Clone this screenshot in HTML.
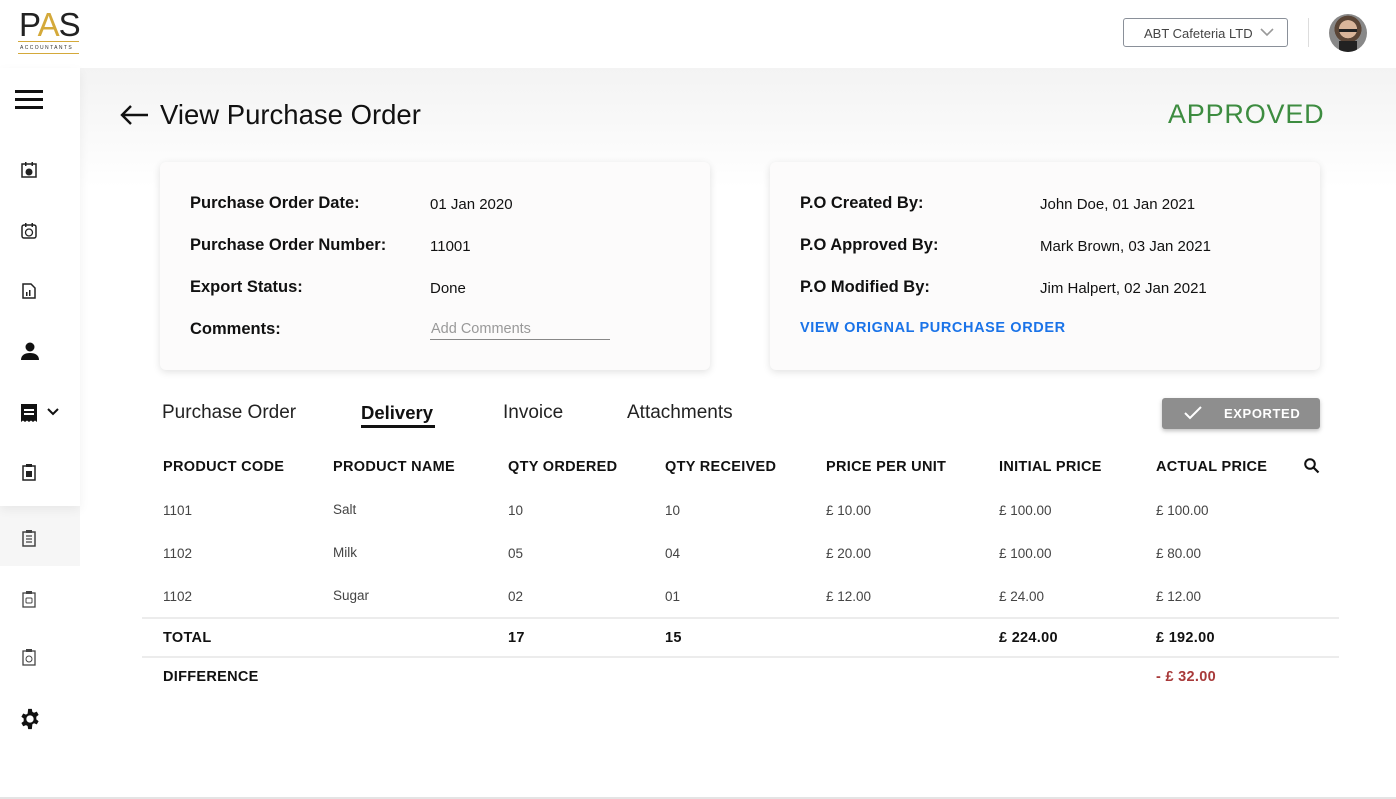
<!DOCTYPE html>
<html><head><meta charset="utf-8"><style>
*{margin:0;padding:0;box-sizing:border-box}
body{width:1396px;height:799px;overflow:hidden;background:#fff;font-family:"Liberation Sans",sans-serif;color:#111;position:relative}
.abs{position:absolute}
.main{left:80px;top:68px;width:1316px;height:730px;background:linear-gradient(#f3f3f3 0,#fff 120px)}
.side{left:0;top:68px;width:80px;height:438px;background:#fff;box-shadow:0 4px 10px rgba(0,0,0,.06)}
.side2{left:0;top:566px;width:80px;height:232px;background:#fff}
.notch{left:0;top:506px;width:80px;height:60px;background:#f6f6f6}
.card{background:#fcfbfb;border-radius:6px;box-shadow:0 2px 8px rgba(0,0,0,.12)}
.lbl{font-size:16.5px;color:#111;font-weight:bold}
.val{font-size:15px;color:#111}
.th{font-size:14.5px;letter-spacing:.3px;color:#111;font-weight:bold}
.td{font-size:13.5px;color:#444}
.tab{font-size:19px;color:#222}
.ic{position:absolute;left:20px}
</style></head><body>
<div class="abs main"></div>
<div class="abs notch"></div>
<div class="abs side"></div>
<div class="abs side2"></div>
<div class="abs" style="left:0;top:797px;width:1396px;height:2px;background:#e4e4e4"></div>

<div class="abs" style="left:19px;top:8px;font-size:33px;letter-spacing:-1px;color:#222;font-weight:300;line-height:1">P<span style="color:#d4a93a">A</span>S</div>
<div class="abs" style="left:18px;top:41px;width:61px;height:1px;background:#d4a93a"></div>
<div class="abs" style="left:20px;top:45px;font-size:5px;letter-spacing:1.4px;color:#333">ACCOUNTANTS</div>
<div class="abs" style="left:18px;top:53px;width:61px;height:1px;background:#d4a93a"></div>

<div class="abs" style="left:15px;top:90px;width:28px;height:3px;background:#111;box-shadow:0 8px 0 #111,0 16px 0 #111"></div>

<svg class="ic" style="top:161px" width="18" height="18" viewBox="0 0 18 18"><rect x="2" y="3" width="14" height="13" fill="none" stroke="#222" stroke-width="1.5"/><rect x="5" y="1" width="1.5" height="4" fill="#222"/><rect x="11.5" y="1" width="1.5" height="4" fill="#222"/><circle cx="9" cy="11" r="3.5" fill="#222"/></svg>
<svg class="ic" style="top:222px" width="18" height="18" viewBox="0 0 18 18"><rect x="2" y="3" width="14" height="13" rx="2" fill="none" stroke="#222" stroke-width="1.5"/><circle cx="9" cy="10.5" r="3.5" fill="none" stroke="#222" stroke-width="1.3"/><rect x="5" y="1" width="1.5" height="4" fill="#222"/><rect x="11.5" y="1" width="1.5" height="4" fill="#222"/></svg>
<svg class="ic" style="top:282px" width="18" height="18" viewBox="0 0 18 18"><path d="M3 2h8l4 4v10H3z" fill="none" stroke="#222" stroke-width="1.5"/><rect x="6" y="10" width="1.5" height="4" fill="#222"/><rect x="9" y="8" width="1.5" height="6" fill="#222"/></svg>
<svg class="ic" style="top:342px" width="20" height="18" viewBox="0 0 20 18"><circle cx="10" cy="5" r="4.5" fill="#111"/><path d="M1 18c0-5 4-7 9-7s9 2 9 7z" fill="#111"/></svg>
<svg class="ic" style="top:403px" width="18" height="20" viewBox="0 0 18 20"><path d="M1 1h16v18l-2-1.5-2 1.5-2-1.5-2 1.5-2-1.5-2 1.5-2-1.5-2 1.5z" fill="#111"/><rect x="4" y="6" width="10" height="2" fill="#fff"/><rect x="4" y="10" width="10" height="2" fill="#fff"/></svg>
<svg class="abs" style="left:46px;top:407px" width="14" height="10" viewBox="0 0 14 10"><path d="M2 2l5 5 5-5" fill="none" stroke="#111" stroke-width="2"/></svg>
<svg class="ic" style="top:463px" width="18" height="18" viewBox="0 0 18 18"><rect x="3" y="3" width="12" height="14" fill="none" stroke="#222" stroke-width="1.5"/><rect x="6" y="1" width="6" height="3" fill="#222"/><rect x="6" y="8" width="6" height="6" fill="#222"/></svg>
<svg class="ic" style="top:529px" width="18" height="18" viewBox="0 0 18 18"><rect x="3" y="3" width="12" height="14" fill="none" stroke="#444" stroke-width="1.5"/><rect x="6" y="1" width="6" height="3" fill="#444"/><path d="M6 7h6M6 10h6M6 13h6" stroke="#444" stroke-width="1.2"/></svg>
<svg class="ic" style="top:590px" width="18" height="18" viewBox="0 0 18 18"><rect x="3" y="3" width="12" height="14" fill="none" stroke="#444" stroke-width="1.3"/><rect x="6" y="1" width="6" height="3" fill="#444"/><rect x="6" y="8" width="6" height="5" rx="1" fill="none" stroke="#444"/></svg>
<svg class="ic" style="top:648px" width="18" height="18" viewBox="0 0 18 18"><rect x="3" y="3" width="12" height="14" fill="none" stroke="#444" stroke-width="1.3"/><rect x="6" y="1" width="6" height="3" fill="#444"/><circle cx="9" cy="11" r="3" fill="none" stroke="#444"/></svg>
<svg class="abs" style="left:19px;top:708px" width="22" height="22" viewBox="0 0 24 24"><path fill="#111" fill-rule="evenodd" d="M10 1h4l.6 3.2 1.8 1 3-1.2 2 3.5-2.5 2v2.9l2.5 2-2 3.5-3-1.2-1.8 1L14 23h-4l-.6-3.3-1.8-1-3 1.2-2-3.5 2.5-2v-2.9l-2.5-2 2-3.5 3 1.2 1.8-1zM12 8a4 4 0 100 8 4 4 0 000-8z"/></svg>

<div class="abs" style="left:1123px;top:18px;width:165px;height:29px;border:1px solid #8a9099;border-radius:3px;font-size:13px;color:#444;padding:7px 0 0 20px">ABT Cafeteria LTD</div>
<svg class="abs" style="left:1260px;top:28px" width="14" height="9" viewBox="0 0 14 9"><path d="M1 1l6 6 6-6" fill="none" stroke="#999" stroke-width="1.6"/></svg>
<div class="abs" style="left:1308px;top:18px;width:1px;height:29px;background:#ddd"></div>
<div class="abs" style="left:1329px;top:14px;width:38px;height:38px;border-radius:50%;background:radial-gradient(circle at 50% 40%,#d9b59a 0 30%,#5a4536 31% 45%,#888 46%);overflow:hidden"><div style="position:absolute;left:10px;top:27px;width:18px;height:12px;background:#222"></div><div style="position:absolute;left:10px;top:15px;width:18px;height:3px;background:#222"></div></div>

<svg class="abs" style="left:118px;top:103px" width="32" height="24" viewBox="0 0 32 24"><path d="M30 12H4M13 3l-9 9 9 9" fill="none" stroke="#111" stroke-width="2.4"/></svg>
<div class="abs" style="left:160px;top:99px;font-size:27.5px;color:#111">View Purchase Order</div>
<div class="abs" style="left:1168px;top:99px;font-size:27px;color:#3d8c40;letter-spacing:.8px">APPROVED</div>

<div class="abs card" style="left:160px;top:162px;width:550px;height:208px"></div>
<div class="abs card" style="left:770px;top:162px;width:550px;height:208px"></div>
<div class="abs lbl" style="left:190px;top:194px">Purchase Order Date:</div>
<div class="abs lbl" style="left:190px;top:236px">Purchase Order Number:</div>
<div class="abs lbl" style="left:190px;top:278px">Export Status:</div>
<div class="abs lbl" style="left:190px;top:320px">Comments:</div>
<div class="abs val" style="left:430px;top:196px">01 Jan 2020</div>
<div class="abs val" style="left:430px;top:238px">11001</div>
<div class="abs val" style="left:430px;top:280px">Done</div>
<div class="abs" style="left:431px;top:321px;font-size:14.5px;color:#999">Add Comments</div>
<div class="abs" style="left:430px;top:339px;width:180px;height:1px;background:#888"></div>

<div class="abs lbl" style="left:800px;top:194px">P.O Created By:</div>
<div class="abs lbl" style="left:800px;top:236px">P.O Approved By:</div>
<div class="abs lbl" style="left:800px;top:278px">P.O Modified By:</div>
<div class="abs val" style="left:1040px;top:196px">John Doe, 01 Jan 2021</div>
<div class="abs val" style="left:1040px;top:238px">Mark Brown, 03 Jan 2021</div>
<div class="abs val" style="left:1040px;top:280px">Jim Halpert, 02 Jan 2021</div>
<div class="abs" style="left:800px;top:320px;font-size:14.5px;color:#1a73e8;letter-spacing:.6px;font-weight:bold">VIEW ORIGNAL PURCHASE ORDER</div>

<div class="abs tab" style="left:162px;top:402px">Purchase Order</div>
<div class="abs tab" style="left:361px;top:402px;color:#111;font-weight:bold;font-size:18.5px">Delivery</div>
<div class="abs" style="left:361px;top:425px;width:74px;height:3px;background:#111"></div>
<div class="abs tab" style="left:503px;top:402px">Invoice</div>
<div class="abs tab" style="left:627px;top:402px">Attachments</div>

<div class="abs" style="left:1162px;top:398px;width:158px;height:31px;background:#8e8e8e;border-radius:3px;box-shadow:0 2px 4px rgba(0,0,0,.25)"></div>
<svg class="abs" style="left:1183px;top:405px" width="20" height="16" viewBox="0 0 20 16"><path d="M2 8l5 5L18 2" fill="none" stroke="#fff" stroke-width="2"/></svg>
<div class="abs" style="left:1224px;top:406px;font-size:13px;color:#fff;letter-spacing:.6px;font-weight:bold">EXPORTED</div>

<div class="abs th" style="left:163px;top:459px">PRODUCT CODE</div>
<div class="abs th" style="left:333px;top:459px">PRODUCT NAME</div>
<div class="abs th" style="left:508px;top:459px">QTY ORDERED</div>
<div class="abs th" style="left:665px;top:459px">QTY RECEIVED</div>
<div class="abs th" style="left:826px;top:459px">PRICE PER UNIT</div>
<div class="abs th" style="left:999px;top:459px">INITIAL PRICE</div>
<div class="abs th" style="left:1156px;top:459px">ACTUAL PRICE</div>
<svg class="abs" style="left:1303px;top:457px" width="18" height="18" viewBox="0 0 18 18"><circle cx="7" cy="7" r="4.8" fill="none" stroke="#111" stroke-width="2"/><path d="M10.5 10.5l5 5" stroke="#111" stroke-width="2.2"/></svg>

<div class="abs td" style="left:163px;top:503px">1101</div><div class="abs td" style="left:333px;top:502px">Salt</div><div class="abs td" style="left:508px;top:503px">10</div><div class="abs td" style="left:665px;top:503px">10</div><div class="abs td" style="left:826px;top:503px">£ 10.00</div><div class="abs td" style="left:999px;top:503px">£ 100.00</div><div class="abs td" style="left:1156px;top:503px">£ 100.00</div>
<div class="abs td" style="left:163px;top:546px">1102</div><div class="abs td" style="left:333px;top:545px">Milk</div><div class="abs td" style="left:508px;top:546px">05</div><div class="abs td" style="left:665px;top:546px">04</div><div class="abs td" style="left:826px;top:546px">£ 20.00</div><div class="abs td" style="left:999px;top:546px">£ 100.00</div><div class="abs td" style="left:1156px;top:546px">£ 80.00</div>
<div class="abs td" style="left:163px;top:589px">1102</div><div class="abs td" style="left:333px;top:588px">Sugar</div><div class="abs td" style="left:508px;top:589px">02</div><div class="abs td" style="left:665px;top:589px">01</div><div class="abs td" style="left:826px;top:589px">£ 12.00</div><div class="abs td" style="left:999px;top:589px">£ 24.00</div><div class="abs td" style="left:1156px;top:589px">£ 12.00</div>

<div class="abs" style="left:142px;top:617px;width:1197px;height:2px;background:#ececec"></div>
<div class="abs th" style="left:163px;top:630px">TOTAL</div>
<div class="abs th" style="left:508px;top:630px">17</div>
<div class="abs th" style="left:665px;top:630px">15</div>
<div class="abs th" style="left:999px;top:630px">£ 224.00</div>
<div class="abs th" style="left:1156px;top:630px">£ 192.00</div>
<div class="abs" style="left:142px;top:656px;width:1197px;height:2px;background:#ececec"></div>
<div class="abs th" style="left:163px;top:669px">DIFFERENCE</div>
<div class="abs th" style="left:1156px;top:669px;color:#a83a3a">- £ 32.00</div>
</body></html>
